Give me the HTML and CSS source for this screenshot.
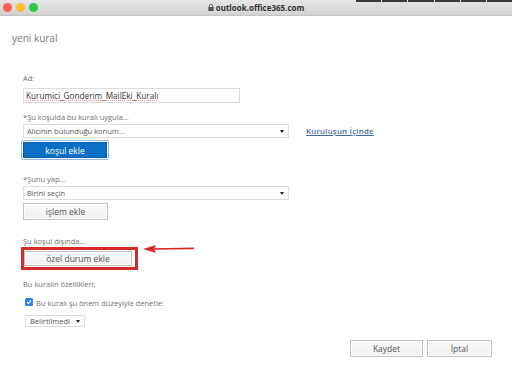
FILE: index.html
```html
<!DOCTYPE html>
<html lang="tr">
<head>
  <meta charset="UTF-8" />
  <meta name="viewport" content="width=device-width, initial-scale=1" />
  <title>yeni kural</title>
  <link rel="stylesheet" href="styles.css">
</head>
<body>
  <div class="titlebar">
    <div class="lights">
      <span class="light red"></span>
      <span class="light yellow"></span>
      <span class="light green"></span>
    </div>
    <div class="address">
      <svg class="lock" width="6" height="7" viewBox="0 0 6 7">
        <path d="M1.3 3V2a1.7 1.7 0 0 1 3.4 0v1" fill="none" stroke="#555" stroke-width="0.9"/>
        <rect x="0.3" y="3" width="5.4" height="4" rx="0.6" fill="#555"/>
      </svg>
      <span>outlook.office365.com</span>
    </div>
    <div class="tabs">
      <span></span><span></span><span></span><span></span><span></span><span></span>
    </div>
  </div>

  <div class="page">
    <h1>yeni kural</h1>

    <div class="form">
      <label class="label first">Ad:</label>
      <div class="textbox"><span class="spell">Kurumici_Gonderim_MailEki_Kuralı</span></div>

      <label class="label cond">*Şu koşulda bu kuralı uygula...</label>
      <div class="row">
        <div class="select wide">Alıcının bulunduğu konum...<span class="caret"></span></div>
        <a class="link" href="#">Kuruluşun İçinde</a>
      </div>
      <div class="focus-ring"><button class="btn primary">koşul ekle</button></div>

      <label class="label gap">*Şunu yap...</label>
      <div class="select wide">Birini seçin<span class="caret"></span></div>
      <button class="btn action">işlem ekle</button>

      <label class="label gap2">Şu koşul dışında...</label>
      <div class="row note">
        <div class="highlight"><button class="btn except">özel durum ekle</button></div>
        <svg class="arrow" width="52" height="10" viewBox="0 0 52 10">
          <line x1="10" y1="5" x2="51" y2="4.4" stroke="#d7282a" stroke-width="1.6"/>
          <path d="M0 5 L13 1 L11 5 L13 9 Z" fill="#d7282a"/>
        </svg>
      </div>

      <label class="label gap3">Bu kuralın özellikleri:</label>
      <div class="check-row">
        <svg class="checkbox" width="8" height="8" viewBox="0 0 8 8">
          <rect width="8" height="8" rx="1.6" fill="#2f7ff0"/>
          <path d="M2 4.2 L3.4 5.7 L6 2.3" fill="none" stroke="#fff" stroke-width="1.1"/>
        </svg>
        <span>Bu kuralı şu önem düzeyiyle denetle:</span>
      </div>
      <div class="select small">Belirtilmedi<span class="caret"></span></div>
    </div>

    <div class="footer">
      <button class="btn footer-btn save">Kaydet</button>
      <button class="btn footer-btn">İptal</button>
    </div>
  </div>
</body>
</html>
```

FILE: styles.css
```css
body {
  margin: 0;
  font-family: 'Open Sans', 'Noto Sans', sans-serif;
  background: #fff;
  color: #707070;
  width: 512px;
  height: 378px;
  overflow: hidden;
}

.titlebar {
  height: 16px;
  background: linear-gradient(#e6e6e6, #d2d2d2);
  border-bottom: 1px solid #c4c4c4;
  box-sizing: border-box;
  display: flex;
  align-items: center;
  position: relative;
}

.lights {
  display: flex;
  gap: 4px;
  padding-left: 3px;
}
.light {
  width: 9px;
  height: 9px;
  border-radius: 50%;
}
.light.red { background: #fe5f57; }
.light.yellow { background: #febc2e; }
.light.green { background: #28c840; }

.address {
  position: absolute;
  left: 0;
  right: 0;
  top: 0;
  height: 15px;
  display: flex;
  justify-content: center;
  align-items: center;
  gap: 2px;
  font-size: 8px;
  font-weight: 700;
  color: #333;
}
.lock { margin-top: -1px; }

.tabs {
  position: absolute;
  top: 0;
  left: 356px;
  right: 0;
  height: 2px;
  display: flex;
  gap: 1px;
}
.tabs span {
  flex: 1;
  background: #3a3a3a;
}

.page {
  padding: 0 0 0 12px;
}

h1 {
  margin: 15px 0 0;
  font-size: 10px;
  line-height: 14px;
  font-weight: 400;
  color: #777;
}

.form {
  padding-left: 11px;
  display: flex;
  flex-direction: column;
  align-items: flex-start;
}

.label {
  display: block;
  font-size: 7.5px;
  line-height: 10px;
  color: #707070;
  margin-top: 5px;
  margin-bottom: 2px;
}
.label.first { margin-top: 28px; margin-bottom: 5px; }
.label.cond { margin-top: 9px; }
.label.gap { margin-top: 14px; }
.label.gap2 { margin-top: 16px; margin-bottom: 1px; }
.label.gap3 { margin-top: 9px; margin-bottom: 9px; }

.textbox {
  width: 217px;
  height: 15px;
  box-sizing: border-box;
  border: 1px solid #dcdcdc;
  font-size: 8.2px;
  line-height: 13px;
  padding-left: 2px;
  color: #333;
}
.spell {
  text-decoration: underline dotted #ef9a9a;
}

.row {
  display: flex;
  align-items: center;
}

.select {
  position: relative;
  height: 14px;
  box-sizing: border-box;
  border: 1px solid #dcdcdc;
  font-size: 7.5px;
  line-height: 12px;
  padding-left: 3px;
  color: #555;
}
.select.wide { width: 266px; }
.select.small {
  width: 60px;
  height: 12px;
  line-height: 10px;
  margin-top: 7px;
  margin-left: 2px;
  padding-left: 4px;
}
.select.small .caret { top: 4px; }

.caret {
  position: absolute;
  right: 4px;
  top: 5px;
  border-left: 2.5px solid transparent;
  border-right: 2.5px solid transparent;
  border-top: 3px solid #222;
}

.link {
  margin-left: 17px;
  font-size: 7.8px;
  color: #3d6b9c;
  text-decoration: underline;
  letter-spacing: 0.25px;
  font-weight: 600;
}

.btn {
  font-family: inherit;
  font-size: 8.5px;
  font-weight: 400;
  color: #555;
  background: linear-gradient(#fafafa, #efefef);
  border: 1px solid #c2c2c2;
  box-shadow: inset 0 0 0 1px #fff;
  margin: 0;
  padding: 0;
  cursor: pointer;
}

.focus-ring {
  margin-top: 2px;
  margin-left: -2px;
  border: 1.5px solid #8dbaf0;
  border-radius: 2px;
  padding: 1px;
}
.btn.primary {
  width: 84px;
  height: 16px;
  background: #0b6fc6;
  border: 1px solid #0a5ea8;
  box-shadow: none;
  color: #fff;
  display: block;
}

.btn.action {
  width: 85px;
  height: 17px;
  margin-top: 3px;
}

.note {
  align-items: flex-start;
  gap: 5px;
  margin-left: -2px;
}
.highlight {
  border: 3px solid #d7282a;
  padding: 1px 3px 1px 0;
}
.btn.except {
  width: 108px;
  height: 15px;
  display: block;
}
.arrow { margin-top: -3px; }

.check-row {
  display: flex;
  align-items: center;
  gap: 3px;
  font-size: 7.5px;
  line-height: 10px;
  margin-left: 2px;
  color: #707070;
}
.checkbox { margin-top: -3px; }

.footer {
  display: flex;
  justify-content: flex-end;
  gap: 4px;
  padding-right: 20px;
  margin-top: 13px;
}
.btn.footer-btn {
  width: 65px;
  height: 17px;
}
.btn.save { width: 73px; }
```
